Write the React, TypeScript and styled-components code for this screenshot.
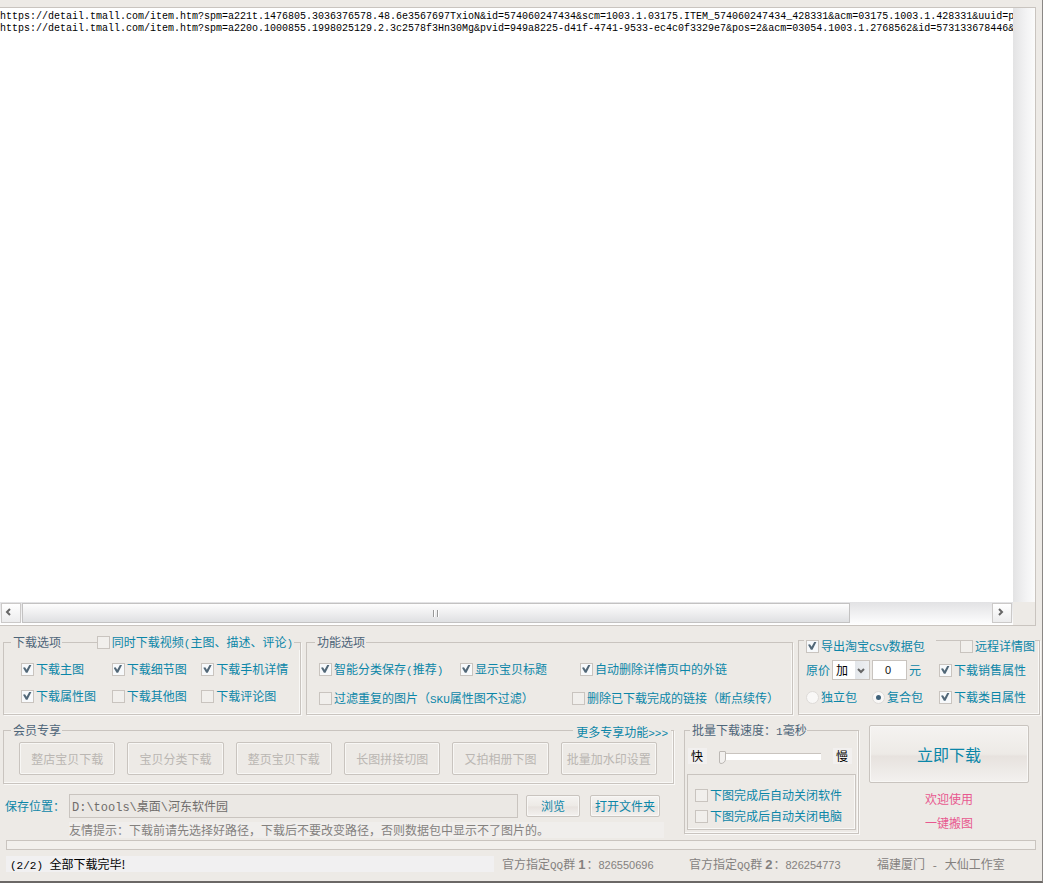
import React from "react";
import styled, { createGlobalStyle, css } from "styled-components";

const c = {
  face: "#edeae6",
  edge: "#c9c4bf",
  light: "#f9f8f6",
  teal: "#0b86a8",
  legend: "#4d6579",
  mute: "#84817e",
  disabled: "#bab6b2",
  pink: "#e8588f",
};

const Global = createGlobalStyle`
  *, *::before, *::after { box-sizing: border-box; }
  body { margin: 0; background: ${c.face}; }
  body, button, input, select {
    font-family: "Noto Sans CJK SC", sans-serif;
    font-size: 12px;
    line-height: 16px;
  }
`;

const Page = styled.main`
  min-height: 100vh;
  display: flex;
  flex-direction: column;
  padding: 7px 0 9px;
  border-right: 1px solid #8a8785;
  border-bottom: 2px solid #6b6866;
  background: ${c.face};
  color: ${c.teal};
  white-space: nowrap;
`;

/* ---------- link list ---------- */

const Console = styled.section`
  flex: 1;
  display: grid;
  grid-template-columns: 1fr 22px;
  grid-template-rows: 1fr 23px;
  margin-right: 6px;
  border: solid ${c.edge};
  border-width: 1px 1px 1px 0;
`;

const Links = styled.textarea`
  width: 100%;
  height: 100%;
  min-height: 240px;
  display: block;
  resize: none;
  border: 0;
  outline: 0;
  padding: 3px 0;
  overflow: hidden;
  background: #fff;
  color: #000;
  font: 10px/12px "Liberation Mono", monospace;
`;

const VTrack = styled.div`
  background: linear-gradient(90deg, #e3e3e4, #f3f3f4 60%, #fbfbfb);
`;

const HScroll = styled.div`
  display: flex;
  padding: 1px 1px 2px;
  background: linear-gradient(#e2e2e4, #f6f6f7 70%, #fff);
`;

const ScrollButton = styled.button`
  width: 20px;
  padding: 0 4px 3px 0;
  display: flex;
  align-items: center;
  justify-content: center;
  border: 1px solid #cbc9c8;
  background: linear-gradient(#fff, #ececed);
`;

const HTrack = styled.div`
  flex: 1;
  display: flex;
  padding-left: 1px;
`;

const HThumb = styled.div`
  width: 85.4%;
  display: flex;
  align-items: center;
  justify-content: center;
  gap: 2px;
  border: 1px solid #c3c2c2;
  background: linear-gradient(#fdfdfd, #f0f0f1 45%, #dfe0e2);
`;

const Grip = styled.span`
  width: 2px;
  height: 7px;
  border-left: 1px solid #999;
  background: #fff;
`;

const Arrow = ({ d }: { d: string }) => (
  <svg width="8" height="8" viewBox="0 0 8 8" fill="none" stroke="#666" strokeWidth="2" aria-hidden="true">
    <path d={d} />
  </svg>
);

/* ---------- shared parts ---------- */

const Group = styled.fieldset<{ $top?: number; $pad?: string }>`
  min-width: 0;
  margin: ${(p) => p.$top ?? 0}px 0 0;
  padding: ${(p) => p.$pad ?? "0"};
  border: 1px solid ${c.edge};
  box-shadow: inset -1px -1px ${c.light}, 1px 1px ${c.light};
`;

const Legend = styled.legend<{ $tall?: boolean; $fit?: boolean }>`
  ${(p) => (p.$fit ? css`margin-left: 3px;` : css`width: 100%;`)}
  height: ${(p) => (p.$tall ? 28 : 16)}px;
  display: flex;
  align-items: ${(p) => (p.$tall ? "flex-end" : "center")};
  padding: 0 0 0 2px;
  background: ${c.face};
  color: ${c.legend};
`;

const Rule = styled.span<{ $width?: number }>`
  ${(p) => (p.$width ? css`width: ${p.$width}px;` : css`flex: 1;`)}
  align-self: center;
  height: 1px;
  margin-left: 1px;
  background: ${c.edge};
`;

const Gap = styled.span`
  width: 10px;
`;

const Latin = styled.span`
  font-family: "Liberation Mono", monospace;
  font-size: 11px;
  line-height: 0;
`;

const Num = styled.span`
  font-family: "Liberation Sans", sans-serif;
  font-size: 11px;
  line-height: 0;
`;

const Strong = styled.b`
  margin: 0 1px 0 3px;
  font-family: "Liberation Sans", sans-serif;
  font-size: 13px;
  line-height: 0;
`;

const Label = styled.label`
  display: inline-flex;
  align-items: center;
  gap: 1px;
  height: 16px;
  color: ${c.teal};
`;

const Box = styled.input`
  appearance: none;
  flex: none;
  width: 13px;
  height: 13px;
  margin: 0 1px 0 0;
  border: 1px solid ${c.edge};
  background: #f1efec;
  &:checked { background: #f7f9fb; }
  &:checked::after {
    content: "";
    display: block;
    width: 9px;
    height: 9px;
    margin: 1px;
    background: #526878;
    clip-path: polygon(0 35%, 22% 30%, 40% 58%, 72% 0, 96% 0, 50% 92%, 32% 92%);
  }
`;

const Dot = styled.input`
  appearance: none;
  flex: none;
  width: 13px;
  height: 13px;
  margin: 0 1px 0 0;
  padding: 3px;
  border: 1px solid #dedbd8;
  border-radius: 50%;
  background: #f9f8f7;
  &:checked::after {
    content: "";
    display: block;
    width: 5px;
    height: 5px;
    border-radius: 50%;
    background: #40627a;
  }
`;

const Check = ({ on, children }: { on?: boolean; children: React.ReactNode }) => (
  <Label>
    <Box type="checkbox" defaultChecked={on} />
    <span>{children}</span>
  </Label>
);

const Button = styled.button<{ $size?: "large" }>`
  padding: 0;
  border: 1px solid ${c.edge};
  border-radius: 2px;
  background: linear-gradient(#f5f3f1, #edeae6 50%, #e7e2de 54%, #f3f1ef);
  box-shadow: inset 0 0 0 1px #f8f7f5;
  color: ${c.teal};
  ${(p) => p.$size === "large" && css`font-size: 16px; line-height: 20px;`}
  &:disabled { background: ${c.face}; color: ${c.disabled}; }
`;

/* ---------- option groups ---------- */

const Options = styled.div`
  display: grid;
  grid-template-columns: 298fr 487fr 242fr;
  column-gap: 5px;
  padding: 0 2px 0 3px;
`;

const Cells = styled.div<{ $cols: string; $top?: number; $left?: number }>`
  display: grid;
  grid-template-columns: ${(p) => p.$cols};
  align-items: center;
  margin-top: ${(p) => p.$top ?? 0}px;
  padding-left: ${(p) => p.$left ?? 0}px;
`;

const Price = styled.div`
  display: flex;
  align-items: center;
  gap: 2px;
  height: 20px;
`;

const SelectWrap = styled.span`
  position: relative;
  display: flex;
  svg { position: absolute; right: 5px; top: 7px; pointer-events: none; }
`;

const Select = styled.select`
  appearance: none;
  width: 38px;
  height: 20px;
  padding: 0 0 0 3px;
  border: 1px solid ${c.edge};
  border-radius: 0;
  background: linear-gradient(90deg, #fff 22px, #e3e6ea 22px, #eef0f2);
  color: #000;
`;

const Amount = styled.input`
  width: 35px;
  height: 20px;
  padding: 0 3px 0 0;
  border: 1px solid ${c.edge};
  background: #fff;
  color: #111;
  text-align: center;
  font: 11px "Liberation Sans", sans-serif;
`;

/* ---------- lower area ---------- */

const Lower = styled.div`
  display: grid;
  grid-template-columns: 671fr 175fr 160fr;
  column-gap: 10px;
  align-items: start;
  margin-top: 7px;
  padding: 0 13px 0 3px;
`;

const VipButtons = styled.div`
  display: grid;
  grid-template-columns: repeat(6, 1fr);
  column-gap: 12px;
  padding: 0 14px 0 8px;
  button { height: 33px; }
`;

const More = styled.a`
  padding: 4px 3px 0 3px;
  color: ${c.teal};
  text-decoration: none;
`;

const SaveRow = styled.div`
  display: grid;
  grid-template-columns: 64px 1fr auto;
  align-items: center;
  margin-top: 10px;
  padding: 0 14px 0 2px;
`;

const PathInput = styled.input`
  min-width: 0;
  height: 24px;
  padding: 0 2px;
  border: 1px solid ${c.edge};
  background: #ebe8e4;
  color: #706d6b;
  font-family: "Liberation Mono", "Noto Sans CJK SC", monospace;
`;

const Actions = styled.div`
  display: grid;
  grid-template-columns: 54px 70px;
  column-gap: 10px;
  margin-left: 8px;
  button { height: 22px; }
`;

const Tip = styled.p`
  margin: 4px 10px 0 66px;
  background: #f0eeec;
  color: ${c.mute};
`;

const SpeedRow = styled.div`
  display: flex;
  align-items: center;
  justify-content: space-between;
  height: 20px;
  padding: 0 4px 0 1px;
  color: #000;
`;

const SpeedEnd = styled.label`
  padding: 0 4px 0 3px;
  background: #f2f0ef;
`;

const Slider = styled.input`
  appearance: none;
  width: 102px;
  height: 15px;
  margin: 0;
  background: transparent;
  &::-webkit-slider-runnable-track {
    height: 7px;
    border-top: 1px solid ${c.edge};
    background: #fff;
  }
  &::-webkit-slider-thumb {
    appearance: none;
    width: 7px;
    height: 13px;
    margin-top: -3px;
    border: 1px solid #bcb8b4;
    border-radius: 1px 1px 5px 2px;
    background: #f2f0ee;
  }
`;

const ShutBox = styled.div`
  display: flex;
  flex-direction: column;
  gap: 5px;
  margin-top: 8px;
  padding: 12px 0 5px 7px;
  border: 1px solid ${c.edge};
  box-shadow: inset -1px -1px ${c.light};
`;

const Go = styled.div`
  display: flex;
  flex-direction: column;
  gap: 8px;
  margin-top: 3px;
  text-align: center;
  color: ${c.pink};
  button { height: 58px; }
  p { margin: 0; }
`;

const Progress = styled.div`
  height: 10px;
  margin: 2px 6px 0;
  border: 1px solid ${c.edge};
  background: #f2f0ed;
`;

const Status = styled.footer`
  display: grid;
  grid-template-columns: 496fr 187fr 188fr 159fr;
  margin: 6px 6px 0;
  color: ${c.mute};
`;

const Message = styled.span`
  margin-right: 8px;
  padding-left: 4px;
  background: #f1f0f1;
  color: #000;
`;

const urls = [
  "https://detail.tmall.com/item.htm?spm=a221t.1476805.3036376578.48.6e3567697TxioN&id=574060247434&scm=1003.1.03175.ITEM_574060247434_428331&acm=03175.1003.1.428331&uuid=p",
  "https://detail.tmall.com/item.htm?spm=a220o.1000855.1998025129.2.3c2578f3Hn30Mg&pvid=949a8225-d41f-4741-9533-ec4c0f3329e7&pos=2&acm=03054.1003.1.2768562&id=573133678446&",
];

const vip = ["整店宝贝下载", "宝贝分类下载", "整页宝贝下载", "长图拼接切图", "又拍相册下图", "批量加水印设置"];

export default function App() {
  return (
    <Page lang="zh-CN">
      <Global />
      <Console>
        <Links aria-label="链接" wrap="off" spellCheck={false} defaultValue={urls.join("\n")} />
        <VTrack />
        <HScroll>
          <ScrollButton aria-label="向左"><Arrow d="M5 1 2 4l3 3" /></ScrollButton>
          <HTrack>
            <HThumb><Grip /><Grip /></HThumb>
          </HTrack>
          <ScrollButton aria-label="向右"><Arrow d="m3 1 3 3-3 3" /></ScrollButton>
        </HScroll>
      </Console>

      <Options>
        <Group $top={8} $pad="11px 0 10px 7px">
          <Legend>
            下载选项
            <Rule />
            <Check>同时下载视频<Latin>(</Latin>主图、描述、评论<Latin>)</Latin></Check>
            <Rule $width={6} />
          </Legend>
          <Cells $cols="90fr 89fr 98fr" $left={10}>
            <Check on>下载主图</Check>
            <Check on>下载细节图</Check>
            <Check on>下载手机详情</Check>
          </Cells>
          <Cells $cols="90fr 89fr 98fr" $left={10} $top={11}>
            <Check on>下载属性图</Check>
            <Check>下载其他图</Check>
            <Check>下载评论图</Check>
          </Cells>
        </Group>

        <Group $top={8} $pad="11px 0 8px 8px">
          <Legend>
            功能选项
            <Rule />
          </Legend>
          <Cells $cols="141fr 120fr 212fr" $left={4}>
            <Check on>智能分类保存<Latin>(</Latin>推荐<Latin>)</Latin></Check>
            <Check on>显示宝贝标题</Check>
            <Check on>自动删除详情页中的外链</Check>
          </Cells>
          <Cells $cols="253fr 220fr" $left={4} $top={13}>
            <Check>过滤重复的图片（<Latin>SKU</Latin>属性图不过滤）</Check>
            <Check>删除已下载完成的链接（断点续传）</Check>
          </Cells>
        </Group>

        <Group $pad="6px 4px 9px 5px">
          <Legend $tall>
            <Check on>导出淘宝<Latin>CSV</Latin>数据包</Check>
            <Gap />
            <Rule />
            <Check>远程详情图</Check>
          </Legend>
          <Cells $cols="133fr 96fr" $left={2}>
            <Price>
              <Label htmlFor="op">原价</Label>
              <SelectWrap>
                <Select id="op" defaultValue="加">
                  <option>加</option>
                </Select>
                <Arrow d="m1 2 3 3 3-3" />
              </SelectWrap>
              <Amount aria-label="金额" defaultValue="0" />
              <span>元</span>
            </Price>
            <Check on>下载销售属性</Check>
          </Cells>
          <Cells $cols="66fr 67fr 96fr" $left={2} $top={9}>
            <Label><Dot type="radio" name="pack" />独立包</Label>
            <Label><Dot type="radio" name="pack" defaultChecked />复合包</Label>
            <Check on>下载类目属性</Check>
          </Cells>
        </Group>
      </Options>

      <Lower>
        <div>
          <Group $pad="4px 2px 8px 7px">
            <Legend>
              会员专享
              <Rule />
              <More href="#more">更多专享功能<Latin>&gt;&gt;&gt;</Latin></More>
            </Legend>
            <VipButtons>
              {vip.map((name) => (
                <Button key={name} disabled>{name}</Button>
              ))}
            </VipButtons>
          </Group>
          <SaveRow>
            <Label htmlFor="path">保存位置：</Label>
            <PathInput id="path" readOnly value="D:\tools\桌面\河东软件园" />
            <Actions>
              <Button>浏览</Button>
              <Button>打开文件夹</Button>
            </Actions>
          </SaveRow>
          <Tip>友情提示：下载前请先选择好路径，下载后不要改变路径，否则数据包中显示不了图片的。</Tip>
        </div>

        <Group $pad="8px 2px 3px 2px">
          <Legend $fit>
            <span>批量下载速度：<Latin>1</Latin>毫秒</span>
          </Legend>
          <SpeedRow>
            <SpeedEnd htmlFor="speed">快</SpeedEnd>
            <Slider id="speed" type="range" min={0} max={100} defaultValue={0} />
            <SpeedEnd htmlFor="speed">慢</SpeedEnd>
          </SpeedRow>
          <ShutBox>
            <Check>下图完成后自动关闭软件</Check>
            <Check>下图完成后自动关闭电脑</Check>
          </ShutBox>
        </Group>

        <Go>
          <Button $size="large">立即下载</Button>
          <p>欢迎使用</p>
          <p>一键搬图</p>
        </Go>
      </Lower>

      <Progress role="progressbar" aria-label="进度" />
      <Status>
        <Message><Latin>(2/2) </Latin>全部下载完毕!</Message>
        <span>官方指定<Latin>QQ</Latin>群<Strong>1</Strong>：<Num>826550696</Num></span>
        <span>官方指定<Latin>QQ</Latin>群<Strong>2</Strong>：<Num>826254773</Num></span>
        <span>福建厦门<Latin> - </Latin>大仙工作室</span>
      </Status>
    </Page>
  );
}
